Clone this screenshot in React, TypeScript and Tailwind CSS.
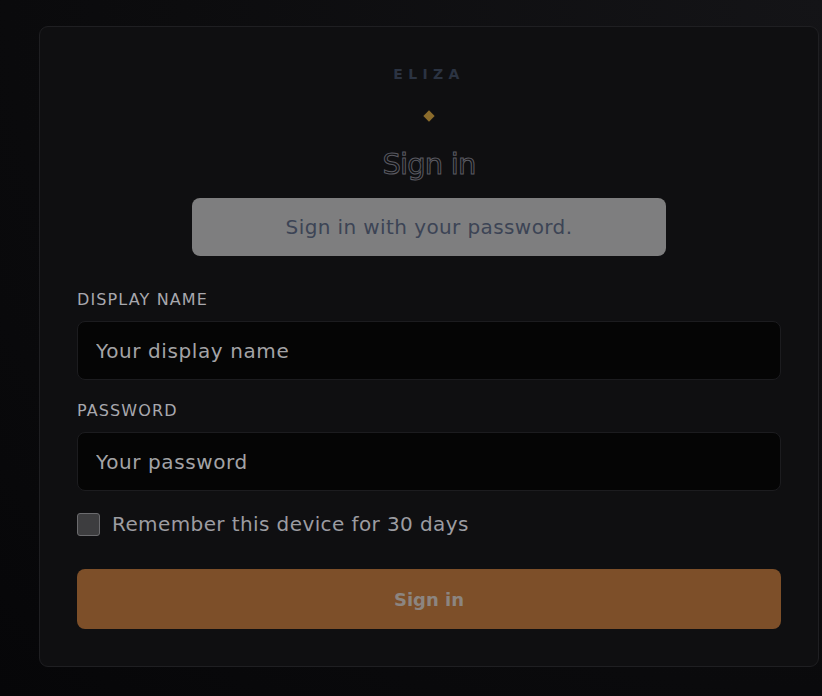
import React, { useState } from 'react';

const App: React.FC = () => {
  const [remember, setRemember] = useState(false);
  const [name, setName] = useState('');
  const [password, setPassword] = useState('');

  return (
    <div
      className="min-h-[696px] w-full bg-[radial-gradient(ellipse_at_top_right,#141417_0%,#0c0c0e_55%,#060608_100%)] pt-[26px] pb-[30px]"
      style={{ fontFamily: '"DejaVu Sans", "Noto Sans", sans-serif' }}
    >
      <div className="ml-[39px] w-[780px] rounded-[9px] border border-[#1f1f22] bg-[#0f0f11] px-[37px] pt-[40px] pb-[37px]">
        <div className="flex flex-col items-center">
          <div className="text-[14px] font-bold leading-none tracking-[0.38em] text-[#2b3342]">ELIZA</div>
          <div className="mt-[31px] h-[8px] w-[8px] rotate-45 bg-[#8b6c2c]" />
          <h1
            className="mt-[24px] text-[29px] leading-[40px] font-normal tracking-[-0.03em] text-transparent"
            style={{ WebkitTextStroke: '1px #5a5a61' }}
          >
            Sign in
          </h1>
          <div className="mt-[14px] flex h-[58px] w-[474px] items-center justify-center rounded-[8px] bg-[#7e7e7f] text-[20px] tracking-[0.02em] text-[#3c4455]">
            Sign in with your password.
          </div>
        </div>

        <form className="mt-[34px] flex flex-col" onSubmit={(e) => e.preventDefault()}>
          <label className="text-[16px] font-medium leading-[20px] tracking-[0.07em] text-[#a8a8ae]">DISPLAY NAME</label>
          <input
            value={name}
            onChange={(e) => setName(e.target.value)}
            placeholder="Your display name"
            className="mt-[11px] h-[59px] rounded-[8px] border border-[#1c1c1f] bg-[#050505] px-[18px] text-[20px] tracking-[0.03em] text-[#d0d0d0] outline-none placeholder:text-[#a3a3a6]"
          />
          <label className="mt-[21px] text-[16px] font-medium leading-[20px] tracking-[0.07em] text-[#a8a8ae]">PASSWORD</label>
          <input
            type="password"
            value={password}
            onChange={(e) => setPassword(e.target.value)}
            placeholder="Your password"
            className="mt-[11px] h-[59px] rounded-[8px] border border-[#1c1c1f] bg-[#050505] px-[18px] text-[20px] tracking-[0.03em] text-[#d0d0d0] outline-none placeholder:text-[#a3a3a6]"
          />
          <label className="mt-[21px] flex cursor-pointer items-center gap-[12px]">
            <span
              onClick={() => setRemember(!remember)}
              className={`h-[23px] w-[23px] rounded-[3px] border-[1.5px] border-[#6b6b6e] ${remember ? 'bg-[#8b5a2b]' : 'bg-[#3d3d3f]'}`}
            />
            <span className="text-[20px] leading-[24px] tracking-[0.02em] text-[#9c9ca1]">Remember this device for 30 days</span>
          </label>
          <button
            type="submit"
            className="mt-[33px] h-[60px] rounded-[8px] bg-[#7d4f29] text-[18px] font-bold text-[#8c8580]"
          >
            Sign in
          </button>
        </form>
      </div>
    </div>
  );
};

export default App;
